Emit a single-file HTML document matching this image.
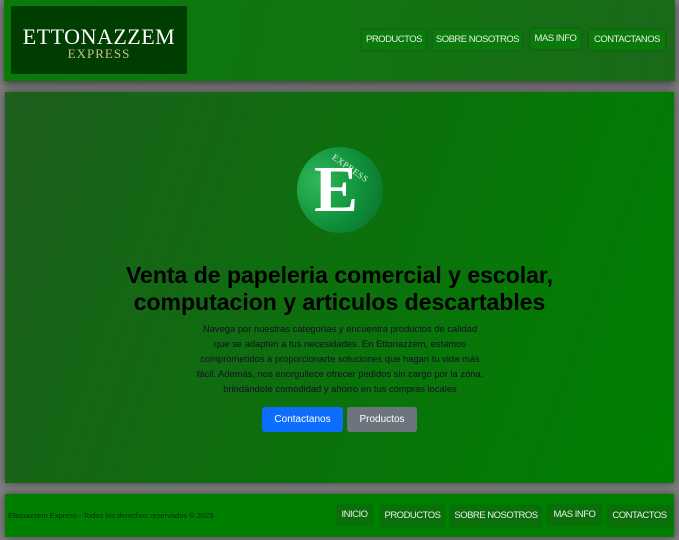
<!DOCTYPE html>
<html><head><meta charset="utf-8"><style>
body{margin:0;width:679px;height:540px;background:#7f7f7f;font-family:"Liberation Sans",sans-serif;position:relative;overflow:hidden}
.hdr{position:absolute;left:4px;top:0;width:671px;height:81px;background:linear-gradient(100deg,#097a09,#117511 50%,#1a6a1a);box-shadow:0 3px 8px rgba(0,0,0,.5)}
.logo{position:absolute;left:7px;top:6px;width:176px;height:68px;background:#003d00;border-radius:2px;text-align:center;font-family:"Liberation Serif",serif}
.logo .a{color:#fff;font-size:22px;margin-top:19px;line-height:23px;letter-spacing:.5px}
.logo .b{color:#c8c088;font-size:13px;line-height:12px;letter-spacing:1px}
.nb{position:absolute;height:20px;line-height:20px;font-size:9.5px;color:#e8f0e8;background:#0a7a0a;text-align:center;box-shadow:0 0 3px rgba(0,0,0,.25);letter-spacing:-.5px;white-space:nowrap}
.main{position:absolute;left:5px;top:92px;width:669px;height:391px;background:linear-gradient(110deg,#1e5e1e,#0c700c 50%,#008000);box-shadow:0 0 8px rgba(0,0,0,.5)}
.circ{position:absolute;left:297px;top:147px;width:86px;height:86px;border-radius:50%;background:radial-gradient(circle at 25% 40%,#2fb85a,#0f8f3a 55%,#0a6a24)}
.E{position:absolute;left:314px;top:160px;font-family:"Liberation Serif",serif;font-size:66px;font-weight:bold;color:#fff;line-height:60px}
.ex{position:absolute;left:336px;top:152px;font-family:"Liberation Serif",serif;font-size:9px;color:#e0f0e0;transform:rotate(35deg);transform-origin:left top;letter-spacing:.5px}
h1{position:absolute;left:0;top:262px;width:679px;margin:0;text-align:center;font-size:23px;line-height:27px;color:#000;font-weight:bold}
p{position:absolute;left:140px;top:321px;width:400px;margin:0;text-align:center;font-size:9.4px;line-height:15px;color:#112;white-space:nowrap}
.btn{position:absolute;top:407px;height:25px;line-height:25px;font-size:10px;color:#fff;text-align:center;border-radius:3px}
.ftr{position:absolute;left:5px;top:494px;width:669px;height:43px;background:#008000;box-shadow:0 0 8px rgba(0,0,0,.5)}
.ft{position:absolute;left:8px;top:511px;font-size:7.5px;color:#0a2a10}
</style></head><body>
<div class="hdr"><div class="logo"><div class="a">ETTONAZZEM</div><div class="b">EXPRESS</div></div></div>
<div class="nb" style="left:362px;top:30px;width:64px">PRODUCTOS</div>
<div class="nb" style="left:433px;top:30px;width:89px">SOBRE NOSOTROS</div>
<div class="nb" style="left:530px;top:29px;width:51px">MAS INFO</div>
<div class="nb" style="left:589px;top:30px;width:76px">CONTACTANOS</div>
<div class="main"></div>
<div class="circ"></div>
<div class="E">E</div>
<div class="ex">EXPRESS</div>
<h1>Venta de papeleria comercial y escolar,<br>computacion y articulos descartables</h1>
<p>Navega por nuestras categorías y encuentra productos de calidad<br>que se adapten a tus necesidades. En Ettonazzem, estamos<br>comprometidos a proporcionarte soluciones que hagan tu vida más<br>fácil. Además, nos enorgullece ofrecer pedidos sin cargo por la zona,<br>brindándote comodidad y ahorro en tus compras locales</p>
<div class="btn" style="left:262px;width:81px;background:#0d6efd">Contactanos</div>
<div class="btn" style="left:347px;width:70px;background:#6c757d">Productos</div>
<div class="ftr"></div>
<div class="ft">Ettonazzem Express - Todos los derechos reservados © 2023</div>
<div class="nb" style="left:337px;top:505px;width:35px;background:#0b6e0b">INICIO</div>
<div class="nb" style="left:381px;top:506px;width:63px;background:#0b6e0b">PRODUCTOS</div>
<div class="nb" style="left:451px;top:506px;width:90px;background:#0b6e0b">SOBRE NOSOTROS</div>
<div class="nb" style="left:548px;top:505px;width:53px;background:#0b6e0b">MAS INFO</div>
<div class="nb" style="left:608px;top:506px;width:63px;background:#0b6e0b">CONTACTOS</div>
</body></html>
